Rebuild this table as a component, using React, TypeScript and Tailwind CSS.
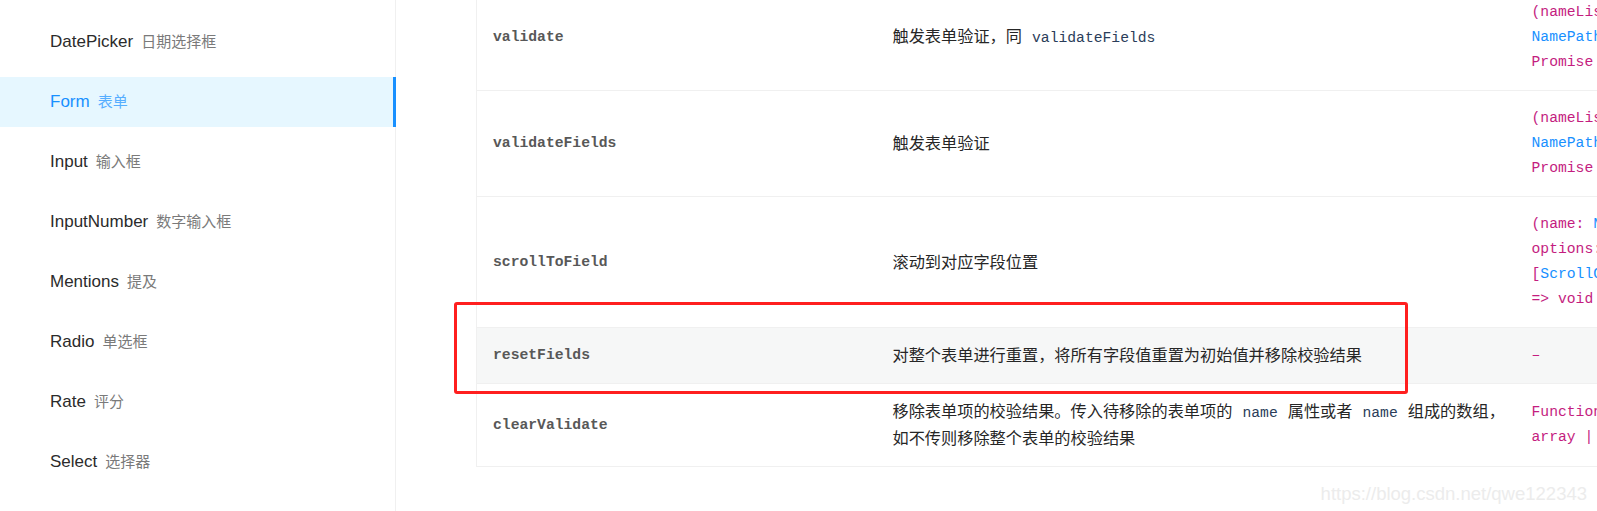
import React from "react";

type Seg = { t: string; c: "m" | "b" };

const menu = [
  { en: "DatePicker", zh: "日期选择框" },
  { en: "Form", zh: "表单", active: true },
  { en: "Input", zh: "输入框" },
  { en: "InputNumber", zh: "数字输入框" },
  { en: "Mentions", zh: "提及" },
  { en: "Radio", zh: "单选框" },
  { en: "Rate", zh: "评分" },
  { en: "Select", zh: "选择器" },
];

const m = (t: string): Seg => ({ t, c: "m" });
const b = (t: string): Seg => ({ t, c: "b" });

const rows: { name: string; desc: React.ReactNode; type: Seg[][]; hl?: boolean }[] = [
  {
    name: "validate",
    desc: (
      <>
        触发表单验证，同<code className="ml-[10px] font-['Liberation_Mono',monospace] text-[14.7px] text-[#2b3d5a]">validateFields</code>
      </>
    ),
    type: [[m("(nameList?:")], [b("NamePath"), m("[]) =>")], [m("Promise")]],
  },
  {
    name: "validateFields",
    desc: "触发表单验证",
    type: [[m("(nameList?:")], [b("NamePath"), m("[]) =>")], [m("Promise")]],
  },
  {
    name: "scrollToField",
    desc: "滚动到对应字段位置",
    type: [[m("(name: "), b("NamePath,")], [m("options:")], [m("["), b("ScrollOptions"), m("])")], [m("=> void")]],
  },
  {
    name: "resetFields",
    desc: "对整个表单进行重置，将所有字段值重置为初始值并移除校验结果",
    type: [[m("–")]],
    hl: true,
  },
  {
    name: "clearValidate",
    desc: (
      <>
        <span className="block whitespace-nowrap">
          移除表单项的校验结果。传入待移除的表单项的
          <code className="mx-[10px] font-['Liberation_Mono',monospace] text-[14.7px] text-[#2b3d5a]">name</code>
          属性或者
          <code className="mx-[10px] font-['Liberation_Mono',monospace] text-[14.7px] text-[#2b3d5a]">name</code>
          组成的数组，
        </span>
        <span className="block whitespace-nowrap">如不传则移除整个表单的校验结果</span>
      </>
    ),
    type: [[m("Function(props:")], [m("array | string)")]],
  },
];

export default function App() {
  return (
    <div className="relative flex h-[511px] w-full overflow-hidden bg-white font-['Liberation_Sans','Noto_Sans_CJK_SC',sans-serif]">
      {/* sidebar */}
      <aside className="w-[396px] shrink-0 border-r border-[#f0f0f0] pt-[17px]">
        <ul className="flex flex-col gap-[10px]">
          {menu.map((item) => (
            <li
              key={item.en}
              className={
                item.active
                  ? "relative flex h-[50px] items-center bg-[#e6f7ff] pl-[50px] text-[#1890ff]"
                  : "flex h-[50px] items-center pl-[50px] text-[#2b2b2b]"
              }
            >
              <span className="text-[17px]">{item.en}</span>
              <span className={item.active ? "ml-[8px] text-[15px] opacity-70" : "ml-[8px] text-[15px] text-[#7a7a7a]"}>
                {item.zh}
              </span>
              {item.active && <span className="absolute right-[-1px] top-0 h-full w-[3px] bg-[#1890ff]" />}
            </li>
          ))}
        </ul>
      </aside>

      {/* content */}
      <main className="flex-1 pl-[80px]">
        <table className="-mt-[15px] w-[1400px] table-fixed border-collapse border-l border-[#f0f0f0]">
          <colgroup>
            <col className="w-[400px]" />
            <col className="w-[639px]" />
            <col />
          </colgroup>
          <tbody>
            {rows.map((r) => (
              <tr key={r.name} className={r.hl ? "border-b border-[#f0f0f0] bg-[#f6f7f7]" : "border-b border-[#f0f0f0]"}>
                <td className="px-[16px] py-[15px] align-middle font-['Liberation_Mono',monospace] text-[14.7px] font-bold leading-[25px] text-[#585858]">
                  {r.name}
                </td>
                <td className="px-[16px] py-[15px] align-middle text-[16.2px] leading-[25px] text-[#262626]">{r.desc}</td>
                <td className="px-[16px] py-[15px] align-middle font-['Liberation_Mono',monospace] text-[14.7px] leading-[25px] whitespace-pre">
                  {r.type.map((line, i) => (
                    <div key={i}>
                      {line.map((s, j) => (
                        <span key={j} className={s.c === "m" ? "text-[#c41d7f]" : "text-[#1890ff]"}>
                          {s.t}
                        </span>
                      ))}
                    </div>
                  ))}
                </td>
              </tr>
            ))}
          </tbody>
        </table>
      </main>

      {/* annotation box */}
      <div className="pointer-events-none absolute left-[454px] top-[302px] h-[92px] w-[954px] rounded-[3px] border-[3px] border-[#ff1f1f]" />

      {/* watermark */}
      <div className="pointer-events-none absolute right-[10px] top-[480px] text-[18.5px] text-[#ececec]">
        https://blog.csdn.net/qwe122343
      </div>
    </div>
  );
}
